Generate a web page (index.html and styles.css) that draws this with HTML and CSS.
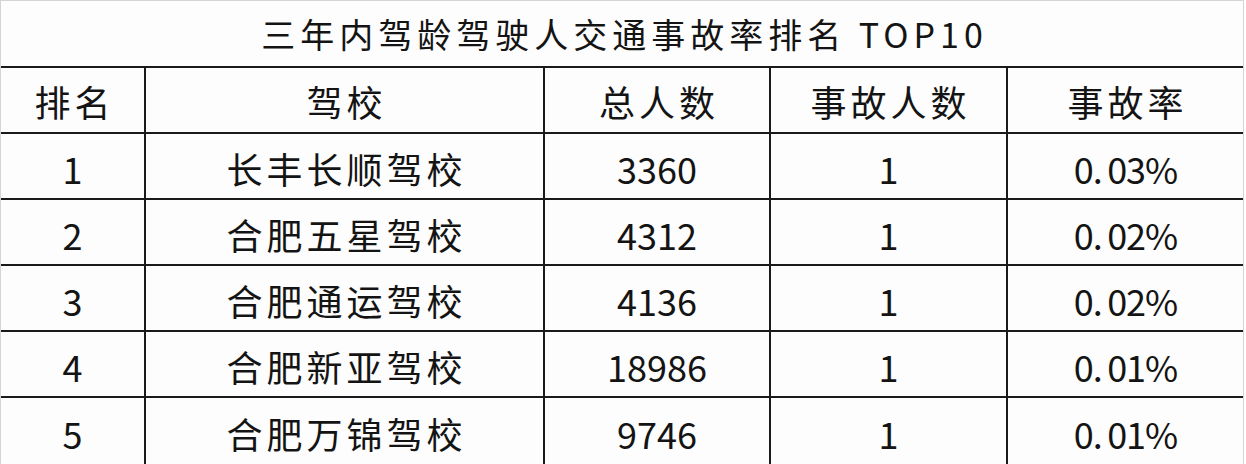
FILE: index.html
```html
<!DOCTYPE html>
<html lang="zh-CN">
<head>
<meta charset="utf-8">
<title>三年内驾龄驾驶人交通事故率排名 TOP10</title>
<link rel="stylesheet" href="styles.css">
</head>
<body>
<div class="sheet">
  <div class="cell title">三年内驾龄驾驶人交通事故率排名 TOP10</div>

  <div class="cell head">排名</div>
  <div class="cell head">驾校</div>
  <div class="cell head">总人数</div>
  <div class="cell head">事故人数</div>
  <div class="cell head">事故率</div>

  <div class="cell num">1</div>
  <div class="cell">长丰长顺驾校</div>
  <div class="cell num">3360</div>
  <div class="cell num">1</div>
  <div class="cell num rate">0<span class="dot">.</span>03%</div>

  <div class="cell num">2</div>
  <div class="cell">合肥五星驾校</div>
  <div class="cell num">4312</div>
  <div class="cell num">1</div>
  <div class="cell num rate">0<span class="dot">.</span>02%</div>

  <div class="cell num">3</div>
  <div class="cell">合肥通运驾校</div>
  <div class="cell num">4136</div>
  <div class="cell num">1</div>
  <div class="cell num rate">0<span class="dot">.</span>02%</div>

  <div class="cell num">4</div>
  <div class="cell">合肥新亚驾校</div>
  <div class="cell num">18986</div>
  <div class="cell num">1</div>
  <div class="cell num rate">0<span class="dot">.</span>01%</div>

  <div class="cell num">5</div>
  <div class="cell">合肥万锦驾校</div>
  <div class="cell num">9746</div>
  <div class="cell num">1</div>
  <div class="cell num rate">0<span class="dot">.</span>01%</div>
</div>
</body>
</html>
```
FILE: styles.css
```css
html, body {
  margin: 0;
  padding: 0;
  background: #ffffff;
}

body {
  font-family: "Noto Sans CJK SC", "Noto Sans", sans-serif;
  color: #141414;
}

.sheet {
  width: 1242px;
  display: grid;
  grid-template-columns: 143px 397px 224px 235px 235px;
  grid-template-rows: 65px 64px 64px 64px 64px 64px 66px;
  gap: 2px;
  background: #1a1a1a;
  border-top: 1px solid #d4d4d4;
  border-left: 1px solid #d4d4d4;
  border-right: 1px solid #d4d4d4;
}

.cell {
  background: #fdfdfd;
  display: flex;
  align-items: center;
  justify-content: center;
  font-size: 36px;
  letter-spacing: 4px;
  padding: 3px 0 0 4px;
  line-height: 1;
  white-space: nowrap;
}

.title {
  grid-column: 1 / -1;
  font-size: 34px;
  letter-spacing: 5px;
  padding: 0 0 0 5px;
}

.head {
  padding-top: 2px;
}

.num {
  letter-spacing: 0;
  padding-left: 0;
}

.rate {
  letter-spacing: -1px;
}

.dot {
  display: inline-block;
  width: 0.4em;
}
```
